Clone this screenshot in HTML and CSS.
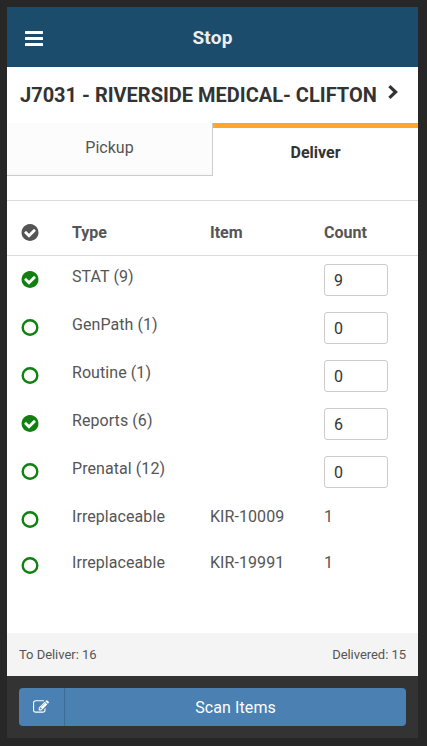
FILE: index.html
```html
<!DOCTYPE html>
<html lang="en">
<head>
<meta charset="utf-8">
<title>Stop</title>
<link rel="stylesheet" href="styles.css">
</head>
<body>
<svg class="defs" width="0" height="0" aria-hidden="true">
  <symbol id="check" viewBox="128 128 1536 1536"><path d="M1412 734q0-28-18-46l-91-90q-19-19-45-19t-45 19l-408 407-226-226q-19-19-45-19t-45 19l-91 90q-18 18-18 46 0 27 18 45l362 362q19 19 45 19 27 0 46-19l543-543q18-18 18-45zm252 162q0 209-103 385.5t-279.5 279.5-385.5 103-385.5-103-279.5-279.5-103-385.5 103-385.5 279.5-279.5 385.5-103 385.5 103 279.5 279.5 103 385.5z"/></symbol>
  <symbol id="ring" viewBox="0 0 17 17"><circle cx="8.5" cy="8.5" r="7.3" fill="none" stroke="currentColor" stroke-width="2.4"/></symbol>
</svg>
<div class="screen">
  <header class="bar">
    <svg class="menu" viewBox="0 0 18 15"><rect width="18" height="3" rx=".5"/><rect y="6" width="18" height="3" rx=".5"/><rect y="12" width="18" height="3" rx=".5"/></svg>
    <h1>Stop</h1>
  </header>
  <div class="stop">
    <h2>J7031 - RIVERSIDE MEDICAL- CLIFTON</h2>
    <svg class="chevron" viewBox="0 0 10 14"><path d="M1.4 1.2 7.6 7l-6.2 5.8" fill="none" stroke="currentColor" stroke-width="3.2"/></svg>
  </div>
  <nav class="tabs"><div class="tab">Pickup</div><div class="tab active">Deliver</div></nav>
  <main>
    <div class="row head"><svg class="icon"><use href="#check"/></svg><span>Type</span><span>Item</span><span>Count</span></div>
    <div class="row"><svg class="icon"><use href="#check"/></svg><span>STAT (9)</span><span></span><input value="9"></div>
    <div class="row"><svg class="icon"><use href="#ring"/></svg><span>GenPath (1)</span><span></span><input value="0"></div>
    <div class="row"><svg class="icon"><use href="#ring"/></svg><span>Routine (1)</span><span></span><input value="0"></div>
    <div class="row"><svg class="icon"><use href="#check"/></svg><span>Reports (6)</span><span></span><input value="6"></div>
    <div class="row"><svg class="icon"><use href="#ring"/></svg><span>Prenatal (12)</span><span></span><input value="0"></div>
    <div class="row short"><svg class="icon"><use href="#ring"/></svg><span>Irreplaceable</span><span>KIR-10009</span><span>1</span></div>
    <div class="row short"><svg class="icon"><use href="#ring"/></svg><span>Irreplaceable</span><span>KIR-19991</span><span>1</span></div>
  </main>
  <div class="totals"><span>To Deliver: 16</span><span>Delivered: 15</span></div>
  <footer>
    <button class="scan">
      <span class="edit"><svg viewBox="0 128 1792 1536"><path d="M888 1184l116-116-152-152-116 116v56h96v96h56zm440-720q-16-16-33 1l-350 350q-17 17-1 33t33-1l350-350q17-17 1-33zm80 594v190q0 119-84.5 203.5t-203.5 84.5h-832q-119 0-203.5-84.5t-84.5-203.5v-832q0-119 84.5-203.5t203.5-84.5h832q63 0 117 25 15 7 18 23 3 17-9 29l-49 49q-14 14-32 8-23-6-45-6h-832q-66 0-113 47t-47 113v832q0 66 47 113t113 47h832q66 0 113-47t47-113v-126q0-13 9-22l64-64q15-15 35-7t20 29zm-96-738l288 288-672 672h-288v-288zm444 132l-92 92-288-288 92-92q28-28 68-28t68 28l152 152q28 28 28 68t-28 68z"/></svg></span>
      <span class="label">Scan Items</span>
    </button>
  </footer>
</div>
</body>
</html>
```

FILE: styles.css
```css
* { box-sizing: border-box; }
body {
  margin: 0;
  height: 746px;
  padding: 7px 9px 8px 7px;
  background: #272727;
  color: #555;
  font: 16px/20px Roboto, sans-serif;
  overflow: hidden;
}
.defs { display: none; }
svg { fill: currentColor; display: block; }
.screen { height: 731px; display: flex; flex-direction: column; background: #fff; }
.bar {
  height: 60px;
  display: grid;
  grid-template-columns: 18px 1fr 18px;
  align-items: center;
  padding: 0 18px;
  background: #1c4c6c;
  color: #fff;
}
.menu { width: 18px; height: 15px; margin-top: 2px; }
.bar h1 { margin: 2px 0 0; text-align: center; font-size: 19px; font-weight: 700; color: #eee; letter-spacing: .2px; }
.stop { height: 56px; display: flex; align-items: center; padding-left: 13px; color: #333; }
.stop h2 { margin: 0; width: 368px; font-size: 20px; font-weight: 700; white-space: nowrap; }
.chevron { width: 10px; height: 14px; margin-top: -7px; }
.tabs { height: 77px; display: flex; align-items: flex-start; }
.tab {
  width: 206px;
  height: 53px;
  padding-top: 15px;
  text-align: center;
  background: linear-gradient(#fcfcfc 48px, #f7f7f7);
  border: solid #ccc;
  border-width: 0 1px 1px 0;
}
.tab.active {
  width: 205px;
  background: #fff;
  border: 0;
  border-top: 5px solid #ffa62b;
  font-weight: 700;
  color: #333;
}
main { flex: 1; }
.row {
  height: 48px;
  display: grid;
  grid-template-columns: 51px 138px 114px 64px;
  align-items: start;
  padding: 11px 0 0 14px;
  letter-spacing: .07px;
}
.row .icon { width: 18px; height: 17px; margin-top: 4px; color: #118011; }
.row input {
  width: 64px;
  height: 32px;
  margin: -3px 0 0;
  padding: 0 9px;
  border: 1px solid #ccc;
  border-radius: 3px;
  font: 16px Roboto, sans-serif;
  color: #333;
}
.row.short { height: 46px; }
.row.head { height: 56px; padding-top: 22px; border: solid #ddd; border-width: 1px 0; font-weight: 700; letter-spacing: 0; }
.row.head .icon { margin-top: 1px; color: #555; }
.totals {
  height: 43px;
  display: flex;
  justify-content: space-between;
  align-items: center;
  padding: 0 12px;
  background: #f4f4f4;
  font-size: 13px;
  letter-spacing: -.04px;
}
footer { height: 62px; padding: 12px; background: #333; }
.scan {
  width: 100%;
  height: 38px;
  display: flex;
  align-items: center;
  padding: 0;
  border: 0;
  border-radius: 4px;
  background: #4a80b2;
  color: #fff;
  font: 16px Roboto, sans-serif;
  letter-spacing: .1px;
}
.edit { width: 46px; height: 38px; display: flex; align-items: center; justify-content: center; border-right: 1px solid #3d6c96; }
.edit svg { width: 16px; height: 14px; margin: -1px 1px 0 0; }
.label { flex: 1; }
```
